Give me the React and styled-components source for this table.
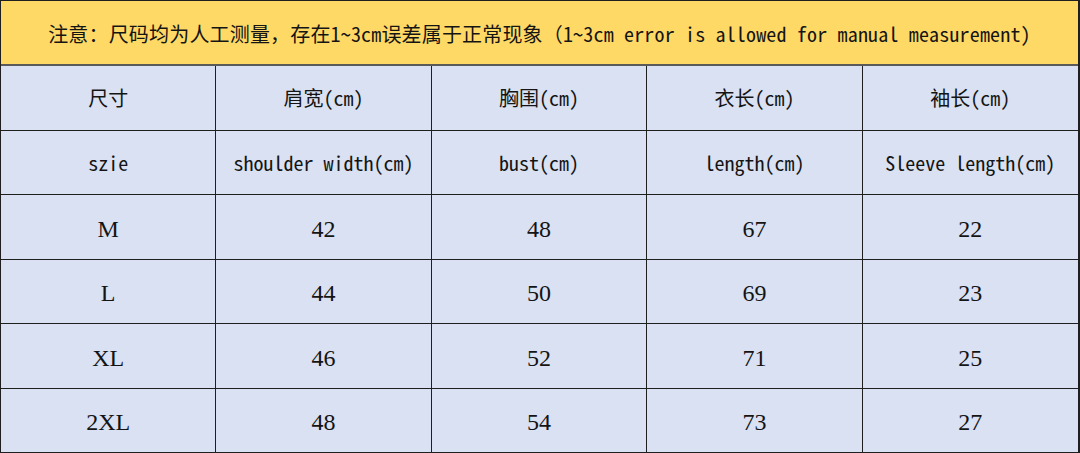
import React from "react";
import styled, { createGlobalStyle } from "styled-components";

const Global = createGlobalStyle`
  html, body { margin: 0; padding: 0; background: #ffffff; }
  #root { width: 1080px; height: 453px; }
`;

const Sheet = styled.div`
  box-sizing: border-box;
  width: 1080px;
  height: 453px;
  display: grid;
  grid-template-columns: repeat(5, 1fr);
  grid-template-rows: 65px repeat(6, 1fr);
  border-top: 1px solid #1f1f1f;
  border-left: 1px solid #1f1f1f;
  border-right: 2px solid #1f1f1f;
  background: #d9e1f2;
  color: #141414;
`;

const Notice = styled.div`
  grid-column: 1 / -1;
  box-sizing: border-box;
  background: #ffd966;
  border-bottom: 2px solid #5a5a5a;
  display: flex;
  align-items: center;
  justify-content: center;
  padding-top: 1px;
  font-family: "Noto Sans Mono CJK SC", "Liberation Mono", "Noto Sans CJK SC", monospace;
  font-size: 20px;
  letter-spacing: 0.17px;
  white-space: nowrap;
`;

const fonts = {
  en: `"Noto Sans Mono CJK SC", "Liberation Mono", "Noto Sans CJK SC", monospace`,
  num: `"Liberation Serif", "Noto Sans CJK SC", serif`,
};

const Cell = styled.div`
  box-sizing: border-box;
  display: flex;
  align-items: center;
  justify-content: center;
  border-right: ${(p) => (p.$last ? "none" : "1px solid #1f1f1f")};
  border-bottom: 1px solid #1f1f1f;
  font-family: ${(p) => fonts[p.$kind]};
  font-size: ${(p) => (p.$kind === "num" ? "24px" : "20px")};
  white-space: nowrap;
  padding-top: ${(p) => (p.$kind === "num" ? "5px" : "0px")};
`;

const headZh = ["尺寸", "肩宽(cm)", "胸围(cm)", "衣长(cm)", "袖长(cm)"];
const headEn = ["szie", "shoulder width(cm)", "bust(cm)", "length(cm)", "Sleeve length(cm)"];
const rows = [
  ["M", "42", "48", "67", "22"],
  ["L", "44", "50", "69", "23"],
  ["XL", "46", "52", "71", "25"],
  ["2XL", "48", "54", "73", "27"],
];

export default function App() {
  return (
    <>
      <Global />
      <Sheet>
        <Notice>注意：尺码均为人工测量，存在1~3cm误差属于正常现象（1~3cm error is allowed for manual measurement)</Notice>
        {headZh.map((t, i) => (
          <Cell key={"z" + i} $kind="en" $last={i === 4}>{t}</Cell>
        ))}
        {headEn.map((t, i) => (
          <Cell key={"e" + i} $kind="en" $last={i === 4}>{t}</Cell>
        ))}
        {rows.map((r, ri) =>
          r.map((t, i) => (
            <Cell key={ri + "-" + i} $kind="num" $last={i === 4}>{t}</Cell>
          ))
        )}
      </Sheet>
    </>
  );
}
